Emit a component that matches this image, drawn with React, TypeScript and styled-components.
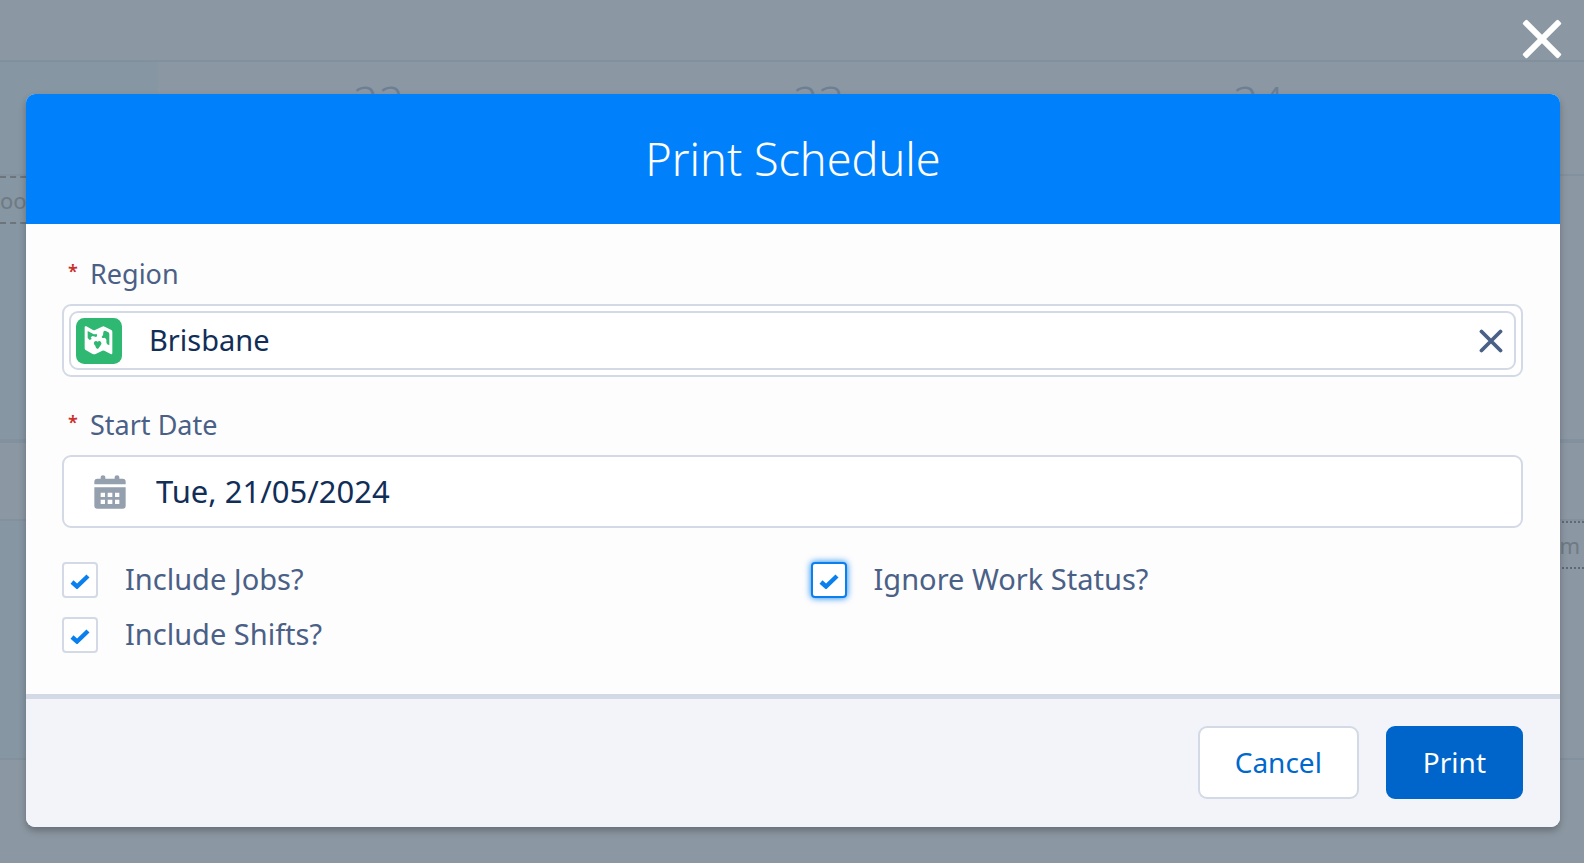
import React, { useState } from "react";
import styled, { createGlobalStyle, css } from "styled-components";

const fontStack = `"Noto Sans", "Open Sans", sans-serif`;

const GlobalStyle = createGlobalStyle`
  *, *::before, *::after { box-sizing: border-box; }
  body {
    margin: 0;
    font-family: ${fontStack};
    background: #8b97a2;
  }
  button, input { font-family: inherit; }
`;

const Page = styled.div`
  display: grid;
  grid-template-columns: minmax(0, 1fr);
  min-height: 100vh;
`;

/* Dimmed calendar behind the dialog */

const Calendar = styled.div`
  grid-area: 1 / 1;
  display: flex;
  flex-direction: column;
  overflow: hidden;
  background: #8b97a2;
`;

const CalendarBar = styled.div`
  height: 62px;
  flex: none;
  border-bottom: 2px solid #80909c;
`;

const CalendarRow = styled.div<{ $height: number; $line: number }>`
  display: grid;
  grid-template-columns: 36fr repeat(3, 100fr) 24fr;
  flex: none;
  height: ${(p) => p.$height}px;
  border-bottom: ${(p) => p.$line}px solid #83919e;
`;

const CalendarCell = styled.div<{ $tinted?: boolean }>`
  min-width: 0;
  background: ${(p) => (p.$tinted ? "#8696a2" : "transparent")};
`;

const DayNumber = styled.div`
  padding-top: 13px;
  font-size: 45px;
  font-weight: 300;
  line-height: 56px;
  text-align: center;
  color: #6d7f95;
`;

const Chip = styled.div<{ $kind: "dashed" | "dotted" }>`
  height: 48px;
  font-size: 22px;
  line-height: 44px;
  border: 2px ${(p) => p.$kind} #6c757c;
  border-width: 2px 0;
  color: #6f7a84;
  ${(p) =>
    p.$kind === "dotted" &&
    css`
      padding-right: 4px;
      text-align: right;
      border-color: #5f6972;
    `}
`;

/* Dialog */

const Overlay = styled.div`
  grid-area: 1 / 1;
  position: relative;
  display: flex;
  flex-direction: column;
  padding-bottom: 36px;
`;

const CloseRow = styled.div`
  display: flex;
  justify-content: flex-end;
  padding: 15px 18px;
  height: 94px;
`;

const IconButton = styled.button<{ $size: number }>`
  display: grid;
  place-items: center;
  width: ${(p) => p.$size}px;
  height: ${(p) => p.$size}px;
  padding: 0;
  border: 0;
  background: none;
  cursor: pointer;
`;

const Dialog = styled.section`
  display: flex;
  flex-direction: column;
  margin: 0 24px 0 26px;
  border-radius: 9px;
  background: #fdfdfd;
  box-shadow: 0 4px 7px rgba(0, 0, 0, 0.26);
`;

const DialogHeader = styled.header`
  padding: 32px 36px;
  border-radius: 9px 9px 0 0;
  background: #0081fb;
  text-align: center;
`;

const Title = styled.h2`
  margin: 0;
  font-size: 45px;
  line-height: 66px;
  font-weight: 300;
  color: #ffffff;
`;

const Form = styled.form`
  display: flex;
  flex-direction: column;
`;

const Fields = styled.div`
  display: flex;
  flex-direction: column;
  gap: 28px;
  padding: 30px 37px 39px 36px;
`;

const Field = styled.div`
  display: flex;
  flex-direction: column;
  gap: 10px;
`;

const FieldLabel = styled.label`
  display: flex;
  gap: 12px;
  padding-left: 6px;
  font-size: 27px;
  line-height: 40px;
  color: #4a6086;
`;

const Required = styled.span`
  width: 10px;
  font-size: 18px;
  font-weight: 600;
  line-height: 34px;
  color: #c9302c;
`;

const Box = styled.div`
  display: flex;
  align-items: center;
  height: 73px;
  border: 2px solid #d3dae5;
  border-radius: 9px;
  background: #ffffff;
`;

const LookupBox = styled(Box)`
  padding: 5px;
`;

const Pill = styled(Box)`
  flex: 1;
  height: 59px;
  gap: 27px;
  padding: 0 1px 0 5px;
`;

const DateBox = styled(Box)`
  gap: 30px;
  padding: 0 30px;
`;

const TextInput = styled.input<{ $large?: boolean }>`
  flex: 1;
  min-width: 0;
  height: 42px;
  padding: 0 0 2px;
  border: 0;
  outline: 0;
  background: transparent;
  font-size: ${(p) => (p.$large ? 31 : 29)}px;
  line-height: 40px;
  color: #112e58;
`;

const Options = styled.div`
  display: grid;
  grid-template-columns: repeat(2, minmax(0, 1fr));
  gap: 15px 36px;
  padding-top: 4px;
`;

const Option = styled.label`
  display: flex;
  align-items: center;
  gap: 27px;
  height: 40px;
  font-size: 29px;
  line-height: 36px;
  color: #4a6086;
`;

const OptionText = styled.span`
  padding-bottom: 2px;
`;

const Tick = styled.span`
  display: grid;
  place-items: center;
  width: 36px;
  height: 36px;

  > * {
    grid-area: 1 / 1;
  }
  > svg {
    pointer-events: none;
  }
`;

const TickInput = styled.input<{ $active?: boolean }>`
  appearance: none;
  width: 36px;
  height: 36px;
  margin: 0;
  border: 2px solid #d3dae5;
  border-radius: 4px;
  background: #ffffff;
  ${(p) =>
    p.$active &&
    css`
      border-color: #0a7fee;
      box-shadow: 0 0 7px #0a7fee;
    `}
`;

const Footer = styled.footer`
  display: flex;
  justify-content: flex-end;
  gap: 27px;
  padding: 27px 37px 28px;
  border-top: 5px solid #d3dae5;
  border-radius: 0 0 9px 9px;
  background: #f3f4f9;
`;

const Button = styled.button<{ $primary?: boolean }>`
  height: 73px;
  padding: 0 35px 2px;
  border: 2px solid ${(p) => (p.$primary ? "#0065ca" : "#d3dae5")};
  border-radius: 9px;
  background: ${(p) => (p.$primary ? "#0065ca" : "#ffffff")};
  font-size: 28px;
  line-height: 40px;
  color: ${(p) => (p.$primary ? "#ffffff" : "#0068cc")};
  cursor: pointer;
`;

const CloseIcon = () => (
  <svg width="40" height="40" viewBox="0 0 40 40" fill="#ffffff" aria-hidden="true">
    <rect x="-5" y="17" width="50" height="6" rx="1.5" transform="rotate(45 20 20)" />
    <rect x="-5" y="17" width="50" height="6" rx="1.5" transform="rotate(-45 20 20)" />
  </svg>
);

const ClearIcon = () => (
  <svg width="24" height="24" viewBox="0 0 24 24" aria-hidden="true">
    <path d="M2.5 2.5L21.5 21.5M21.5 2.5L2.5 21.5" stroke="#4a6086" strokeWidth="3.8" strokeLinecap="round" />
  </svg>
);

const MapIcon = () => (
  <svg width="46" height="46" viewBox="0 0 138 138" aria-hidden="true">
    <rect width="138" height="138" rx="25" fill="#2eb872" />
    <path
      d="M26 28Q26 23 31 25L51 36Q54 38 57 36L78 26Q82 24 86 26L106 36Q109 38 109 42V104Q109 110 104 108L85 98Q82 97 79 98L59 108Q54 110 50 108L30 97Q26 95 26 91Z"
      fill="#ffffff"
    />
    <path
      d="M35 39L52 48Q57 50 61 47Q66 53 60 57L50 54L44 58L47 63L41 66L35 60Z"
      fill="#2eb872"
    />
    <path d="M55 71Q60 67 65 71Q70 67 75 72Q79 77 73 83L66 93L60 90L58 83Q51 76 55 71Z" fill="#2eb872" />
    <path d="M82 43Q84 36 91 40L97 43Q100 45 100 49V81Q92 81 91 72Q93 63 86 59Q77 62 77 56Q83 52 82 43Z" fill="#2eb872" />
  </svg>
);

const CalendarIcon = () => (
  <svg width="32" height="34" viewBox="0 0 96 102" fill="#94a0ad" aria-hidden="true">
    <path d="M1 28V20Q1 11 10 11H20V6Q20 1 27 1Q34 1 34 6V11H62V6Q62 1 69 1Q76 1 76 6V11H86Q95 11 95 20V28Z" />
    <path
      fillRule="evenodd"
      d="M1 37H95V92Q95 101 86 101H10Q1 101 1 92ZM20 53V66H33V53ZM41 53V66H55V53ZM63 53V66H76V53ZM20 74V87H33V74ZM41 74V87H55V74ZM63 74V87H76V74Z"
    />
  </svg>
);

const CheckMark = () => (
  <svg width="20" height="18" viewBox="0 0 20 18" aria-hidden="true">
    <path d="M2 11L7 15.5L18 5" fill="none" stroke="#0a80ee" strokeWidth="4.4" strokeLinejoin="miter" />
  </svg>
);

function CheckOption({ label, active }: { label: string; active?: boolean }) {
  const [checked, setChecked] = useState(true);
  return (
    <Option>
      <Tick>
        <TickInput
          type="checkbox"
          $active={active}
          checked={checked}
          onChange={(e) => setChecked(e.target.checked)}
        />
        {checked && <CheckMark />}
      </Tick>
      <OptionText>{label}</OptionText>
    </Option>
  );
}

export default function App() {
  const [region, setRegion] = useState("Brisbane");
  const [date, setDate] = useState("Tue, 21/05/2024");

  return (
    <>
      <GlobalStyle />
      <Page>
        <Calendar aria-hidden="true">
          <CalendarBar />
          <CalendarRow $height={114} $line={2}>
            <CalendarCell $tinted />
            <DayNumber>22</DayNumber>
            <DayNumber>23</DayNumber>
            <DayNumber>24</DayNumber>
          </CalendarRow>
          <CalendarRow $height={267} $line={4}>
            <CalendarCell $tinted>
              <Chip $kind="dashed">oo</Chip>
            </CalendarCell>
          </CalendarRow>
          <CalendarRow $height={78} $line={2} />
          <CalendarRow $height={239} $line={2}>
            <CalendarCell $tinted />
            <CalendarCell />
            <CalendarCell />
            <CalendarCell />
            <CalendarCell>
              <Chip $kind="dotted">m</Chip>
            </CalendarCell>
          </CalendarRow>
        </Calendar>

        <Overlay>
          <CloseRow>
            <IconButton type="button" $size={48} aria-label="Close">
              <CloseIcon />
            </IconButton>
          </CloseRow>
          <Dialog role="dialog" aria-labelledby="dialog-title">
            <DialogHeader>
              <Title id="dialog-title">Print Schedule</Title>
            </DialogHeader>
            <Form onSubmit={(e) => e.preventDefault()}>
              <Fields>
                <Field>
                  <FieldLabel htmlFor="region">
                    <Required>*</Required>
                    Region
                  </FieldLabel>
                  <LookupBox>
                    <Pill>
                      <MapIcon />
                      <TextInput id="region" value={region} onChange={(e) => setRegion(e.target.value)} />
                      <IconButton
                        type="button"
                        $size={44}
                        aria-label="Clear region"
                        onClick={() => setRegion("")}
                      >
                        <ClearIcon />
                      </IconButton>
                    </Pill>
                  </LookupBox>
                </Field>
                <Field>
                  <FieldLabel htmlFor="start-date">
                    <Required>*</Required>
                    Start Date
                  </FieldLabel>
                  <DateBox>
                    <CalendarIcon />
                    <TextInput
                      id="start-date"
                      $large
                      value={date}
                      onChange={(e) => setDate(e.target.value)}
                    />
                  </DateBox>
                </Field>
                <Options>
                  <CheckOption label="Include Jobs?" />
                  <CheckOption label="Ignore Work Status?" active />
                  <CheckOption label="Include Shifts?" />
                </Options>
              </Fields>
              <Footer>
                <Button type="button">Cancel</Button>
                <Button type="submit" $primary>
                  Print
                </Button>
              </Footer>
            </Form>
          </Dialog>
        </Overlay>
      </Page>
    </>
  );
}
